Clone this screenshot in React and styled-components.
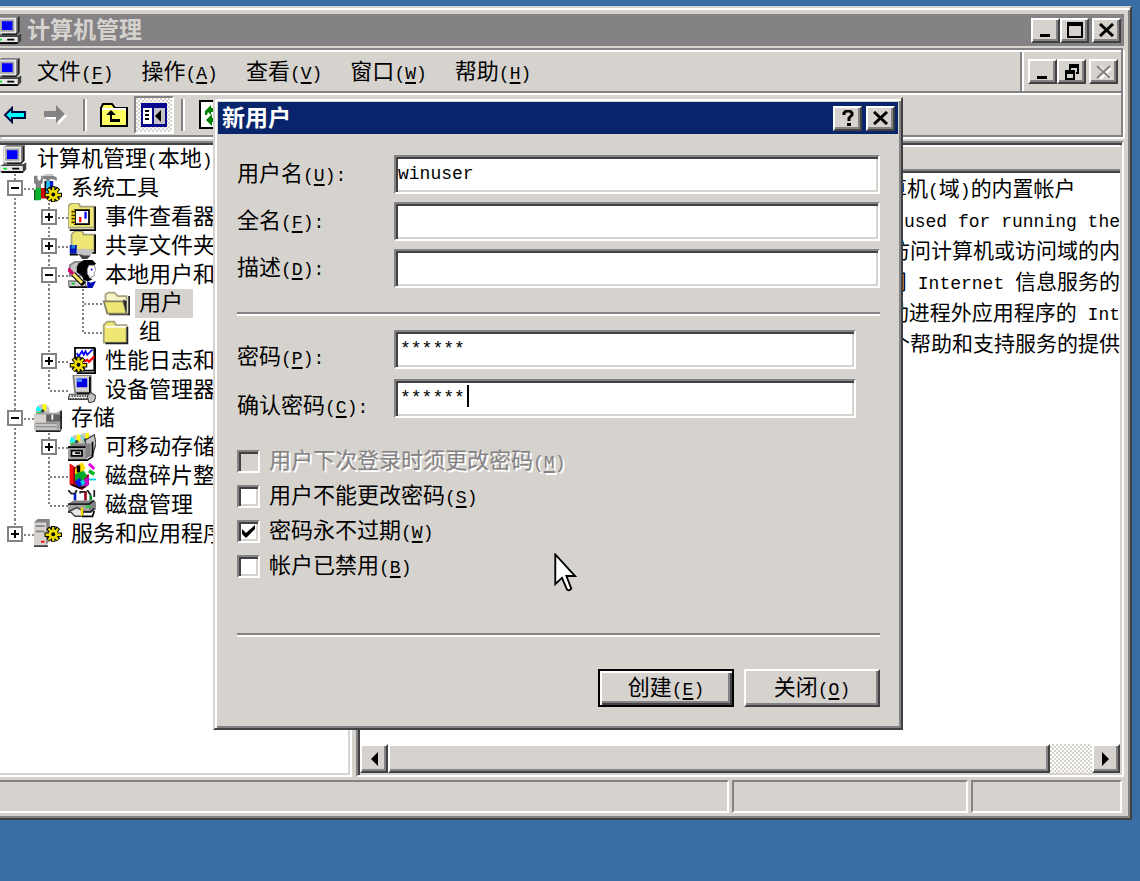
import React from "react";
import styled, { createGlobalStyle, css } from "styled-components";

const face = "#d6d3ce";
const shade = "#848284";
const dark = "#424142";

const GlobalStyle = createGlobalStyle`
  *, *::before, *::after { box-sizing: border-box; }
  body {
    margin: 0;
    background: #396da5;
    color: #000;
    font-family: "Liberation Sans", "Noto Sans CJK SC", sans-serif;
    font-size: 22px;
    line-height: 28px;
  }
  button, input { font: inherit; color: inherit; margin: 0; padding: 0; border-radius: 0; outline: none; }
  ul { list-style: none; margin: 0; padding: 0; }
`;

const sunken = css`
  border: 2px solid;
  border-color: ${shade} #fff #fff ${shade};
  box-shadow: inset 2px 2px 0 ${dark}, inset -2px -2px 0 ${face};
`;

const raised = css`
  border: 2px solid;
  border-color: #fff ${dark} ${dark} #fff;
  box-shadow: inset -2px -2px 0 ${shade};
  background: ${face};
`;

const dither = css`
  background: repeating-conic-gradient(#fff 0 25%, ${face} 0 50%) 0 0 / 4px 4px;
`;

const Desktop = styled.div`
  position: relative;
  display: flex;
  flex-direction: column;
  min-height: 100vh;
  padding: 6px 8px 61px 0;
  overflow: hidden;
`;

const AppWindow = styled.main`
  flex: 1;
  display: flex;
  flex-direction: column;
  min-width: 0;
  padding: 4px 6px 5px 0;
  background: ${face};
  border-top: 2px solid ${face};
  border-right: 2px solid ${dark};
  border-bottom: 2px solid ${dark};
  box-shadow: inset 0 2px 0 #fff, inset -2px -2px 0 ${shade};
`;

const TitleBar = styled.header`
  display: flex;
  align-items: center;
  height: 32px;
  margin: 2px 0 2px;
  padding-right: 3px;
  background: ${({ $active }) => ($active ? "#08246b" : shade)};
  color: ${({ $active }) => ($active ? "#fff" : face)};
`;

const Title = styled.h1`
  flex: 1;
  margin: 0;
  padding-left: 4px;
  font-size: 23px;
  line-height: 30px;
  font-weight: 700;
  white-space: nowrap;
`;

const ButtonGroup = styled.div`
  display: flex;
  gap: ${({ $gap }) => $gap || 0}px;
`;

const CaptionButton = styled.button`
  display: grid;
  place-items: center;
  width: 29px;
  height: 25px;
  ${raised}
`;

const CloseCaption = styled(CaptionButton)`
  margin-left: 3px;
`;

const IconBox = styled.span`
  display: flex;
  flex: none;
  width: 28px;
  height: 28px;
  svg { display: block; width: 28px; height: 28px; }
`;

const ClippedIcon = styled(IconBox)`
  width: 23px;
  overflow: hidden;
  justify-content: flex-end;
  svg { flex: none; }
`;

const Rebar = styled.div`
  margin-right: 1px;
  border: solid ${shade};
  border-width: 2px 2px 2px 0;
  box-shadow: 2px 2px 0 #fff;
`;

const MenuBar = styled.nav`
  display: flex;
  align-items: stretch;
  height: 43px;
  border-top: 2px solid #fff;
  border-bottom: 2px solid ${shade};
`;

const Menus = styled.div`
  flex: 1;
  display: flex;
  align-items: center;
  border-right: 2px solid ${shade};
`;

const MenuButton = styled.button`
  margin: 0 14px;
  border: 0;
  background: none;
  white-space: nowrap;
`;

const MdiButtons = styled.div`
  display: flex;
  align-items: center;
  gap: 3px;
  padding: 0 3px 0 4px;
  border-left: 2px solid #fff;
`;

const Toolbar = styled.div`
  display: flex;
  align-items: center;
  height: 42px;
  border-top: 2px solid #fff;
`;

const ToolButton = styled.button`
  display: grid;
  place-items: center;
  width: 40px;
  height: 38px;
  border: 2px solid transparent;
  background: none;
  ${({ $pressed }) => $pressed && css`
    border-color: ${shade} #fff #fff ${shade};
    ${dither}
  `}
`;

const NavButton = styled(ToolButton)`
  width: 36px;
  padding-right: 6px;
`;

const ToolSeparator = styled.span`
  width: 4px;
  height: 32px;
  margin: 0 7px;
  border-left: 2px solid ${shade};
  border-right: 2px solid #fff;
`;

const Panes = styled.div`
  flex: 1;
  display: flex;
  gap: 4px;
  min-height: 0;
  margin-top: 4px;
`;

const TreePane = styled.section`
  flex: none;
  width: 352px;
  padding: 2px 2px 2px 0;
  background: #fff;
  ${sunken}
  border-left: 0;
  box-shadow: inset 0 2px 0 ${dark}, inset -2px -2px 0 ${face};
`;

const Tree = styled.ul`
  display: flex;
  flex-direction: column;
  height: 403px;
`;

const TreeRow = styled.li`
  flex: 1 1 0;
  min-height: 0;
  display: flex;
  align-items: stretch;
  white-space: nowrap;
`;

const Guide = styled.span`
  position: relative;
  flex: none;
  display: flex;
  align-items: center;
  width: 34px;
  &::before {
    content: "";
    position: absolute;
    left: 14px;
    top: 0;
    bottom: ${({ $kind }) => ($kind === "corner" ? "50%" : "0")};
    width: 2px;
    background: repeating-linear-gradient(${shade} 0 2px, #fff 2px 4px);
  }
  &::after {
    content: "";
    position: absolute;
    left: 16px;
    right: 0;
    top: 50%;
    height: 2px;
    background: ${({ $kind }) =>
      $kind === "line" ? "none" : `repeating-linear-gradient(90deg, ${shade} 0 2px, #fff 2px 4px)`};
  }
`;

const Expander = styled.button`
  position: relative;
  z-index: 1;
  display: grid;
  place-items: center;
  width: 16px;
  height: 16px;
  margin-left: 7px;
  border: 2px solid ${shade};
  background: #fff;
`;

const TreeLabel = styled.span`
  display: flex;
  align-items: center;
  margin-left: 5px;
  padding: 0 ${({ $selected }) => ($selected ? 10 : 3)}px 0 4px;
  line-height: 26px;
  background: ${({ $selected }) => ($selected ? face : "transparent")};
`;

const ListPane = styled.section`
  flex: 1;
  min-width: 0;
  display: flex;
  flex-direction: column;
  padding: 2px;
  background: #fff;
  ${sunken}
`;

const ListViewport = styled.div`
  flex: 1;
  min-height: 0;
  overflow: hidden;
`;

const List = styled.table`
  width: 100%;
  table-layout: fixed;
  border-collapse: separate;
  border-spacing: 0;
  th {
    height: 28px;
    padding: 0;
    background: ${face};
    border-top: 2px solid #fff;
    border-bottom: 2px solid ${dark};
    box-shadow: inset 0 -2px 0 ${shade};
  }
  th:first-child { width: 526px; }
  td {
    height: 31px;
    padding: 0;
    font-size: 21px;
    line-height: 30px;
    white-space: nowrap;
    overflow: hidden;
  }
  tbody tr:not(:first-child) td { text-align: right; }
`;

const ScrollBar = styled.div`
  display: flex;
  height: 29px;
  ${dither}
`;

const ScrollButton = styled.button`
  display: grid;
  place-items: center;
  width: 28px;
  ${raised}
`;

const ScrollThumb = styled.div`
  flex: 1;
  margin-right: 42px;
  ${raised}
`;

const StatusBar = styled.footer`
  display: flex;
  gap: 3px;
  height: 33px;
  margin-top: 3px;
  padding-right: 2px;
`;

const StatusCell = styled.div`
  flex: ${({ $width }) => ($width ? "none" : 1)};
  width: ${({ $width }) => ($width ? `${$width}px` : "auto")};
  border: 2px solid;
  border-color: ${shade} #fff #fff ${shade};
  &:first-child { border-left: 0; }
`;

const Dialog = styled.section`
  position: absolute;
  left: 213px;
  top: 97px;
  width: 690px;
  padding: 1px 3px 21px;
  background: ${face};
  border: 2px solid;
  border-color: ${face} ${dark} ${dark} ${face};
  box-shadow: inset 2px 2px 0 #fff, inset -2px -2px 0 ${shade};
`;

const DialogBody = styled.form`
  display: flex;
  flex-direction: column;
  padding: 19px 18px 0 19px;
`;

const Fields = styled.div`
  display: flex;
  flex-direction: column;
  gap: ${({ $gap }) => $gap}px;
  padding-right: ${({ $inset }) => $inset || 0}px;
`;

const Field = styled.div`
  display: flex;
  align-items: flex-start;
`;

const FieldLabel = styled.label`
  flex: none;
  width: 157px;
  height: 39px;
  padding-top: ${({ $drop }) => $drop}px;
  line-height: 38px;
  white-space: nowrap;
`;

const InputWrap = styled.div`
  position: relative;
  flex: 1;
  display: flex;
`;

const TextBox = styled.input`
  flex: 1;
  min-width: 0;
  height: 39px;
  padding: 0 4px 2px ${({ $indent }) => $indent}px;
  background: #fff;
  font-family: "Liberation Mono", monospace;
  font-size: 18px;
  ${sunken}
`;

const Caret = styled.span`
  position: absolute;
  left: 73px;
  top: 6px;
  width: 2px;
  height: 22px;
  background: #000;
`;

const Divider = styled.hr`
  width: 100%;
  height: 4px;
  margin: ${({ $top, $bottom }) => `${$top}px 0 ${$bottom}px`};
  border: 0;
  border-top: 2px solid ${shade};
  border-bottom: 2px solid #fff;
`;

const Options = styled.div`
  display: flex;
  flex-direction: column;
  gap: 7px;
  margin-top: 29px;
`;

const Option = styled.label`
  display: flex;
  align-items: center;
  gap: 9px;
  height: 28px;
  white-space: nowrap;
  color: ${({ $disabled }) => ($disabled ? shade : "#000")};
  text-shadow: ${({ $disabled }) => ($disabled ? "2px 2px 0 #fff" : "none")};
`;

const CheckCell = styled.span`
  display: grid;
  place-items: center;
  > * { grid-area: 1 / 1; }
  svg { pointer-events: none; }
`;

const CheckBox = styled.input`
  appearance: none;
  width: 23px;
  height: 23px;
  background: #fff;
  ${sunken}
  &:disabled { background: ${face}; }
`;

const Actions = styled.div`
  display: flex;
  justify-content: flex-end;
  gap: 10px;
`;

const PushButton = styled.button`
  width: 136px;
  height: 38px;
  white-space: nowrap;
  ${raised}
  ${({ $primary }) => $primary && css`
    border-color: #000;
    box-shadow: inset 2px 2px 0 #fff, inset -2px -2px 0 ${dark}, inset -4px -4px 0 ${shade};
  `}
`;

const Latin = styled.span`
  font-family: "Liberation Mono", monospace;
  font-size: 18px;
  line-height: 1;
  white-space: pre;
  u { text-underline-offset: 3px; text-decoration-thickness: 2px; }
`;

const Pointer = styled.svg`
  position: absolute;
  left: 554px;
  top: 553px;
  width: 23px;
  height: 39px;
`;

function Key({ k, colon }) {
  return <Latin>(<u>{k}</u>){colon ? ":" : ""}</Latin>;
}

function Pix({ children, w = 16, h = 16, ...rest }) {
  return (
    <svg viewBox={`0 0 ${w} ${h}`} aria-hidden="true" {...rest}>
      {children}
    </svg>
  );
}

const ComputerIcon = () => (
  <Pix>
    <path d="M2 1L4 0H14V9L12 11H2z" fill="#848284" />
    <path d="M2 1h10v9H2z" fill="#e7e7e7" />
    <path d="M3 2h8v7H3z" fill="#a5a2a5" />
    <path d="M4 3h6v5H4z" fill="#0000ff" />
    <path d="M14 0v9l-2 2H4v-1h8l1-1V1z" fill="#212021" />
    <path d="M0 12l2-1h11l2-1v4l-2 2H1l-1-1z" fill="#424142" />
    <path d="M0 12h13v3H0z" fill="#e7e7e7" />
    <path d="M7 13h4v1H7z" fill="#000" />
    <path d="M2 13h2v1H2z" fill="#00e020" />
    <path d="M1 15h12v1H1z" fill="#000" />
  </Pix>
);

const Gear = ({ x = 0, y = 0 }) => (
  <g transform={`translate(${x} ${y})`}>
    <path d="M5 0v9M0 5h10M2 1l6 7M8 1L2 8" stroke="#000" strokeWidth="2.6" />
    <path d="M5 .6v8M.6 5h8.800M2.300 1.500l5.400 6.300M7.700 1.500L2.300 7.800" stroke="#efdf00" strokeWidth="1.3" />
    <circle cx="5" cy="4.700" r="2.600" fill="#efdf00" />
    <circle cx="5" cy="4.700" r="1.100" fill="#000" />
  </g>
);

const ToolsIcon = () => (
  <Pix>
    <path d="M0 1h2v2l1 1 1-1V1h1v4L4 6v5H1V6L0 5z" fill="#848284" />
    <path d="M5 1h6l2 1v2l-2-1H9v3H7V3H5z" fill="#848284" />
    <path d="M6 0h5v1H6z" fill="#c6c3c6" />
    <path d="M1 8h3v7H1z" fill="#00b52a" />
    <path d="M0 9h1v6H0z" fill="#006110" />
    <path d="M4 8h4v6H4z" fill="#d60000" />
    <path d="M7 4h2v7H7z" fill="#18c6ff" />
    <path d="M9 4h2v6H9z" fill="#001cc6" />
    <path d="M6 4h1v6H6z" fill="#000" />
    <Gear x={6} y={7} />
  </Pix>
);

const folderFill = "#efe773";

const EventIcon = () => (
  <Pix>
    <path d="M0 2l2-2h4l1 2h8v12H0z" fill={folderFill} stroke="#a5a27b" />
    <path d="M15 2v13H1v1h15V2z" fill="#000" />
    <path d="M4 4h8v8H4z" fill="#fff" stroke="#000" />
    <path d="M2 4h2v8H2z" fill="#dec600" />
    <path d="M2 5h2M2 7h2M2 9h2M2 11h2" stroke="#000" strokeWidth=".7" />
    <path d="M7 8v3" stroke="#f00" strokeWidth="1.3" />
    <path d="M10 5v4" stroke="#00f" strokeWidth="1.3" />
  </Pix>
);

const SharedIcon = () => (
  <Pix>
    <path d="M2 2l2-2h4l1 2h6v9H2z" fill={folderFill} stroke="#a5a27b" />
    <path d="M15 2v10H5v1h11V2z" fill="#000" />
    <path d="M1 8h4v5H1z" fill="#0018b5" />
    <path d="M1 13h5v1H1z" fill="#000" />
    <path d="M2 8h2v2H2z" fill="#1882d6" />
    <path d="M5 11l4-1 5 1v2l-3 2H8l-3-2z" fill="#c6c3c6" />
    <path d="M6 13l3 1h4l-2 2H8z" fill="#424142" />
  </Pix>
);

const UsersIcon = () => (
  <Pix>
    <path d="M1 3l3-2h5v8H1z" fill="#c6c3c6" stroke="#848284" />
    <path d="M6 2l3-2h5l2 2-1 1h-3l-1 3 1 4 2 1-2 1H9L8 9 5 7V4z" fill="#000" />
    <path d="M12 3h3l1 3-1 1v2l-2 1-2-2V5z" fill="#fff" stroke="#636163" strokeWidth=".4" />
    <path d="M13 5h1v1h-1z" fill="#00f" />
    <path d="M0 12h10v4H1z" fill="#d6d3ce" stroke="#848284" />
    <path d="M2 13h2v1H2z" fill="#00c030" />
    <path d="M0 5l3 3" stroke="#d6006b" strokeWidth="2" />
    <path d="M3 8l6 6" stroke="#000" strokeWidth="3" />
    <path d="M3 8l5 5" stroke="#ffe763" strokeWidth="1.8" />
    <path d="M11 12l2 1 3-1-1 2-1 2h-3z" fill="#0008b5" />
    <path d="M1 15h10v1H1z" fill="#000" />
  </Pix>
);

const OpenFolderIcon = () => (
  <Pix>
    <path d="M2 6V3l2-1h3l2 2h5v9H3z" fill="#f7f3c6" stroke="#a5a27b" />
    <path d="M15 4v10H4v1h12V4z" fill="#212021" />
    <path d="M1 7h11l2 7H3z" fill={folderFill} stroke="#848263" />
    <path d="M12 6l2 1v7z" fill="#212021" />
  </Pix>
);

const FolderIcon = () => (
  <Pix>
    <path d="M1 4l2-2h4l1 2h6v10H1z" fill={folderFill} stroke="#a5a27b" />
    <path d="M2 5h12" stroke="#fff" />
    <path d="M15 5v10H2v-1h12V5z" fill="#212021" />
  </Pix>
);

const PerfIcon = () => (
  <Pix>
    <path d="M4 1h11v13H4z" fill="#fff" stroke="#000" />
    <path d="M15 1v14H5v1h11V1z" fill="#000" />
    <path d="M5 4l1 2 2-3 1 2 1-2 1 2 3-3" fill="none" stroke="#00f" />
    <path d="M9 9l2-1 1 1 3-3" fill="none" stroke="#f00" strokeWidth="1.4" />
    <Gear x={1} y={6} />
  </Pix>
);

const DeviceIcon = () => (
  <Pix>
    <path d="M3 0h10v10H4z" fill="#d6d3ce" stroke="#848284" />
    <path d="M5 2h6v5H5z" fill="#0000e0" />
    <path d="M5 2h3v2H5z" fill="#4a82ff" />
    <path d="M13 1v10H5v-1h7V1z" fill="#000" />
    <path d="M1 11h12l1 3H0z" fill="#e7e7e7" stroke="#424142" strokeWidth=".7" />
    <path d="M2 12h9M1 13.500h10" stroke="#424142" strokeDasharray="1 .5" strokeWidth=".8" />
    <path d="M11 12l2-2 3 2-1 3-3 1z" fill="#c6c3c6" stroke="#424142" strokeWidth=".6" />
  </Pix>
);

const Disc = ({ x = 0, y = 0 }) => (
  <g transform={`translate(${x} ${y})`}>
    <circle cx="4" cy="4" r="4" fill="#c6c3c6" />
    <path d="M4 4V0h2v4z" fill="#ff0" />
    <path d="M4 4L1 1 0 4z" fill="#0ff" />
    <path d="M4 4L0 5l2 2z" fill="#00d030" />
    <circle cx="4" cy="4" r="1" fill="#424142" />
  </g>
);

const StorageIcon = () => (
  <Pix>
    <Disc x={1} y={0} />
    <path d="M0 6l3-1h10l3-2v10l-2 2H1l-1-1z" fill="#a5a2a5" />
    <path d="M0 6h7v9H0z" fill="#d6d3ce" />
    <path d="M0 11h13v4H0z" fill="#c6c3c6" />
    <path d="M1 11h12M1 13h12" stroke="#848284" strokeWidth=".6" />
    <path d="M7 6h9v4H7z" fill="#636163" />
    <path d="M10 6h1v3h-1z" fill="#fff" />
    <path d="M1 15h14V4h1v10l-1 2H1z" fill="#212021" />
  </Pix>
);

const RemovableIcon = () => (
  <Pix>
    <Disc x={6} y={0} />
    <Disc x={1} y={1} />
    <path d="M10 4l5-3 1 5-2 7h-4z" fill="#c6c3c6" stroke="#424142" strokeWidth=".7" />
    <path d="M0 8l3-2h10v7l-3 2H0z" fill="#848284" />
    <path d="M0 8h10v7H0z" fill="#a5a2a5" />
    <path d="M0 8h10M0 15.500h11l3-2V5" stroke="#000" fill="none" />
    <path d="M2 10h6v3H2z" fill="#e7e7e7" stroke="#000" />
    <path d="M4 11.500h3" stroke="#000" />
  </Pix>
);

const DefragIcon = () => (
  <Pix>
    <path d="M1 1l3 2 3-2 1 7 4-1v6l-4 3-7-3z" fill="#9c0018" />
    <path d="M1 1l2 1v11l-2-1z" fill="#ff1010" />
    <path d="M4 4l4-4 2 3-2 4H4z" fill="#ffe000" />
    <path d="M5 2h2v4H5z" fill="#000" />
    <path d="M4 7l5-2 2 3-3 3H4z" fill="#00a829" />
    <path d="M4 11l3-2 1 4-2 2z" fill="#0018f0" />
    <path d="M8 11l4-3v5l-4 2z" fill="#c600c6" />
    <path d="M7 11l2-1 1 2-2 2z" fill="#00c6d6" />
    <path d="M12 1l3 3" stroke="#e000e0" strokeWidth="1.7" />
    <path d="M12 5l3 2" stroke="#00b520" strokeWidth="2" />
    <path d="M12 10h4" stroke="#00cede" />
    <path d="M2 13l5 2 3-1" fill="none" stroke="#000" strokeWidth=".8" />
  </Pix>
);

const DiskIcon = () => (
  <Pix>
    <path d="M0 0l2 2h2l1-2M7 2V1h3v1M11 0l2 3M15 0v4" stroke="#212021" fill="none" />
    <path d="M4 2v4" stroke="#001cc6" strokeWidth="1.5" />
    <path d="M10 1v5" stroke="#9c0018" strokeWidth="1.5" />
    <path d="M13 3v3" stroke="#008a29" strokeWidth="1.5" />
    <path d="M0 8l3-2h12l1 1v4l-3 2H0z" fill="#848284" />
    <path d="M0 8h12v4H0z" fill="#a5a2a5" />
    <path d="M0 8h12l3-2M0 12.500h13l2-2" fill="none" stroke="#212021" />
    <path d="M10 9h3v1h-3z" fill="#00d030" />
    <path d="M1 12l4-2 4 2-1 3H4z" fill="#e7e7e7" stroke="#424142" strokeWidth=".8" />
    <path d="M8 10v5" stroke="#f7d600" strokeWidth="1.4" />
    <path d="M8 15h6l1-3" stroke="#000" fill="none" />
  </Pix>
);

const ServicesIcon = () => (
  <Pix>
    <path d="M0 2l2-2h7v12l-2 3H0z" fill="#848284" />
    <path d="M0 2h7v13H0z" fill="#d6d3ce" />
    <path d="M1 4h5M1 7h5" stroke="#848284" />
    <path d="M4 13h2" stroke="#f00" />
    <path d="M0 15.500h8" stroke="#424142" />
    <Gear x={6} y={4} />
  </Pix>
);

const MinimizeGlyph = () => <Pix width="14" height="16" w={14} h={16}><path d="M1 12h10v3H1z" fill="#000" /></Pix>;
const MaximizeGlyph = () => (
  <Pix width="16" height="16"><path d="M0 0h16v16H0zM2 4v10h12V4z" fillRule="evenodd" fill="#000" /></Pix>
);
const RestoreGlyph = () => (
  <Pix width="14" height="16" w={14} h={16}>
    <path d="M4 0h10v10h-3V8h1V4H6v2H4z" fill="#000" />
    <path d="M0 6h10v10H0zM2 10v4h6v-4z" fillRule="evenodd" fill="#000" />
  </Pix>
);
const CloseGlyph = ({ disabled }) => (
  <Pix width="16" height="14" w={16} h={14}>
    {disabled && <path d="M3 2L15 14M15 3L4 14" stroke="#fff" strokeWidth="3" />}
    <path d="M1 1L14 13M14 1L1 13" stroke={disabled ? shade : "#000"} strokeWidth={disabled ? 2 : 3} />
  </Pix>
);
const HelpGlyph = () => (
  <Pix width="12" height="16" w={12} h={16}>
    <path d="M2 5V3l2-2h4l2 2v2L7 8v3" fill="none" stroke="#000" strokeWidth="3" />
    <path d="M5 13h4v3H5z" fill="#000" />
  </Pix>
);
const ArrowGlyph = ({ right }) => (
  <Pix width="8" height="14" w={8} h={14}><path d={right ? "M0 0l7 7-7 7z" : "M8 0L1 7l7 7z"} fill="#000" /></Pix>
);

const BackIcon = () => (
  <Pix width="24" height="18" w={24} h={18}>
    <path d="M2 9l7-7v4h13v6H9v4z" fill="#00ffff" stroke="#000842" strokeWidth="2" />
  </Pix>
);
const ForwardIcon = () => (
  <Pix width="26" height="20" w={26} h={20}>
    <path d="M3 8h12V2l9 9-9 9v-6H3z" fill="#fff" />
    <path d="M1 6h12V0l9 9-9 9v-6H1z" fill={shade} />
  </Pix>
);
const UpIcon = () => (
  <Pix width="28" height="26" w={28} h={26}>
    <path d="M1 6l2-4h9l3 4h12v18H1z" fill="#ffff63" stroke="#000" strokeWidth="2" />
    <path d="M2 7h24" stroke="#fff" strokeWidth="2" />
    <path d="M6 13l5-5 5 5h-4v4h8v3H10v-7z" fill="#000" />
  </Pix>
);
const ConsoleTreeIcon = () => (
  <Pix width="26" height="24" w={26} h={24}>
    <path d="M0 0h26v24H0z" fill="#08088c" />
    <path d="M2 5h9v16H2z" fill="#fff" />
    <path d="M13 5h11v16H13z" fill="#c6c3c6" />
    <path d="M4 8h4M4 12h4M4 16h4" stroke="#000" strokeWidth="2" />
    <path d="M20 7v12l-6-6z" fill="#000" />
  </Pix>
);
const RefreshIcon = () => (
  <Pix width="26" height="30" w={26} h={30}>
    <path d="M1 1h17l6 6v21H1z" fill="#fff" stroke="#000" strokeWidth="2" />
    <path d="M12 5v3h3v4h-3v3L9 12l-1 3H6v-4l3-3z" fill="#008200" />
    <path d="M7 20l6-6v4h5l1-3v4l-3 3h-3v4z" fill="#008200" />
  </Pix>
);

const tree = [
  { text: <>计算机管理<Latin>(</Latin>本地<Latin>)</Latin></>, icon: ComputerIcon, guides: [] },
  { text: "系统工具", icon: ToolsIcon, guides: ["tee"], sign: "-" },
  { text: "事件查看器", icon: EventIcon, guides: ["line", "tee"], sign: "+" },
  { text: "共享文件夹", icon: SharedIcon, guides: ["line", "tee"], sign: "+" },
  { text: "本地用户和", icon: UsersIcon, guides: ["line", "tee"], sign: "-" },
  { text: "用户", icon: OpenFolderIcon, guides: ["line", "line", "tee"], selected: true },
  { text: "组", icon: FolderIcon, guides: ["line", "line", "corner"] },
  { text: "性能日志和", icon: PerfIcon, guides: ["line", "tee"], sign: "+" },
  { text: "设备管理器", icon: DeviceIcon, guides: ["line", "corner"] },
  { text: "存储", icon: StorageIcon, guides: ["tee"], sign: "-" },
  { text: "可移动存储", icon: RemovableIcon, guides: ["line", "tee"], sign: "+" },
  { text: "磁盘碎片整", icon: DefragIcon, guides: ["line", "tee"] },
  { text: "磁盘管理", icon: DiskIcon, guides: ["line", "corner"] },
  { text: "服务和应用程序", icon: ServicesIcon, guides: ["corner"], sign: "+" },
];

const menus = [["文件", "F"], ["操作", "A"], ["查看", "V"], ["窗口", "W"], ["帮助", "H"]];

const descriptions = [
  <>算机<Latin>(</Latin>域<Latin>)</Latin>的内置帐户</>,
  <Latin>used for running the</Latin>,
  <>访问计算机或访问域的内</>,
  <>问<Latin> Internet </Latin>信息服务的</>,
  <>动进程外应用程序的<Latin> Int</Latin></>,
  <>个帮助和支持服务的提供</>,
];

const options = [
  { id: "must", text: "用户下次登录时须更改密码", k: "M", disabled: true },
  { id: "cannot", text: "用户不能更改密码", k: "S" },
  { id: "never", text: "密码永不过期", k: "W", checked: true },
  { id: "disabled", text: "帐户已禁用", k: "B" },
];

function FormField({ id, label, k, value, drop, indent, caret }) {
  return (
    <Field>
      <FieldLabel htmlFor={id} $drop={drop}>{label}<Key k={k} colon /></FieldLabel>
      <InputWrap>
        <TextBox id={id} type="text" defaultValue={value} $indent={indent} autoComplete="off" spellCheck={false} />
        {caret && <Caret />}
      </InputWrap>
    </Field>
  );
}

function NewUserDialog() {
  return (
    <Dialog role="dialog" aria-label="新用户">
      <TitleBar as="div" $active>
        <Title as="h2">新用户</Title>
        <ButtonGroup $gap={4}>
          <CaptionButton type="button" aria-label="帮助"><HelpGlyph /></CaptionButton>
          <CaptionButton type="button" aria-label="关闭"><CloseGlyph /></CaptionButton>
        </ButtonGroup>
      </TitleBar>
      <DialogBody onSubmit={(e) => e.preventDefault()}>
        <Fields $gap={8}>
          <FormField id="user" label="用户名" k="U" value="winuser" drop={0} indent={2} />
          <FormField id="full" label="全名" k="F" value="" drop={0} indent={2} />
          <FormField id="desc" label="描述" k="D" value="" drop={0} indent={2} />
        </Fields>
        <Divider $top={24} $bottom={14} />
        <Fields $gap={10} $inset={24}>
          <FormField id="pass" label="密码" k="P" value="******" drop={8} indent={4} />
          <FormField id="confirm" label="确认密码" k="C" value="******" drop={8} indent={4} caret />
        </Fields>
        <Options>
          {options.map((o) => (
            <Option key={o.id} $disabled={o.disabled}>
              <CheckCell>
                <CheckBox type="checkbox" defaultChecked={o.checked} disabled={o.disabled} />
                {o.checked && (
                  <Pix width="13" height="13" w={13} h={13}>
                    <path d="M0 4l4 4 9-8v4l-9 9-4-4z" fill="#000" />
                  </Pix>
                )}
              </CheckCell>
              <span>{o.text}<Key k={o.k} /></span>
            </Option>
          ))}
        </Options>
        <Divider $top={53} $bottom={32} />
        <Actions>
          <PushButton type="submit" $primary>创建<Key k="E" /></PushButton>
          <PushButton type="button">关闭<Key k="O" /></PushButton>
        </Actions>
      </DialogBody>
    </Dialog>
  );
}

export default function App() {
  return (
    <Desktop>
      <GlobalStyle />
      <AppWindow>
        <TitleBar>
          <ClippedIcon><ComputerIcon /></ClippedIcon>
          <Title>计算机管理</Title>
          <ButtonGroup>
            <CaptionButton aria-label="最小化"><MinimizeGlyph /></CaptionButton>
            <CaptionButton aria-label="最大化"><MaximizeGlyph /></CaptionButton>
            <CloseCaption aria-label="关闭"><CloseGlyph /></CloseCaption>
          </ButtonGroup>
        </TitleBar>
        <Rebar>
          <MenuBar>
            <Menus>
              <ClippedIcon><ComputerIcon /></ClippedIcon>
              {menus.map(([t, k]) => <MenuButton key={k}>{t}<Key k={k} /></MenuButton>)}
            </Menus>
            <MdiButtons>
              <ButtonGroup>
                <CaptionButton aria-label="最小化"><MinimizeGlyph /></CaptionButton>
                <CaptionButton aria-label="还原"><RestoreGlyph /></CaptionButton>
              </ButtonGroup>
              <CaptionButton aria-label="关闭" disabled><CloseGlyph disabled /></CaptionButton>
            </MdiButtons>
          </MenuBar>
          <Toolbar>
            <NavButton aria-label="后退"><BackIcon /></NavButton>
            <ToolButton aria-label="前进"><ForwardIcon /></ToolButton>
            <ToolSeparator />
            <ToolButton aria-label="上一级"><UpIcon /></ToolButton>
            <ToolButton aria-label="显示控制台树" $pressed><ConsoleTreeIcon /></ToolButton>
            <ToolSeparator />
            <ToolButton aria-label="刷新"><RefreshIcon /></ToolButton>
          </Toolbar>
        </Rebar>
        <Panes>
          <TreePane>
            <Tree>
              {tree.map(({ text, icon: Icon, guides, sign, selected }, i) => (
                <TreeRow key={i}>
                  {guides.map((kind, g) => (
                    <Guide key={g} $kind={kind}>
                      {sign && g === guides.length - 1 && (
                        <Expander aria-label={sign === "+" ? "展开" : "折叠"}>
                          <Pix width="10" height="10" w={10} h={10}>
                            <path d={sign === "+" ? "M1 4h3V1h2v3h3v2H6v3H4V6H1z" : "M1 4h8v2H1z"} fill="#000" />
                          </Pix>
                        </Expander>
                      )}
                    </Guide>
                  ))}
                  <IconBox><Icon /></IconBox>
                  <TreeLabel $selected={selected}><span>{text}</span></TreeLabel>
                </TreeRow>
              ))}
            </Tree>
          </TreePane>
          <ListPane>
            <ListViewport>
              <List>
                <thead><tr><th /><th /></tr></thead>
                <tbody>
                  {descriptions.map((d, i) => <tr key={i}><td /><td>{d}</td></tr>)}
                </tbody>
              </List>
            </ListViewport>
            <ScrollBar>
              <ScrollButton aria-label="向左滚动"><ArrowGlyph /></ScrollButton>
              <ScrollThumb />
              <ScrollButton aria-label="向右滚动"><ArrowGlyph right /></ScrollButton>
            </ScrollBar>
          </ListPane>
        </Panes>
        <StatusBar>
          <StatusCell />
          <StatusCell $width={236} />
          <StatusCell $width={151} />
        </StatusBar>
      </AppWindow>
      <NewUserDialog />
      <Pointer viewBox="0 0 12 21" aria-hidden="true">
        <path d="M.5 .8v16l3.600-3.400 2.800 6.400q1.200 .7 2.200-.6L6.500 12.400H11.200z" fill="#fff" stroke="#000" />
      </Pointer>
    </Desktop>
  );
}
